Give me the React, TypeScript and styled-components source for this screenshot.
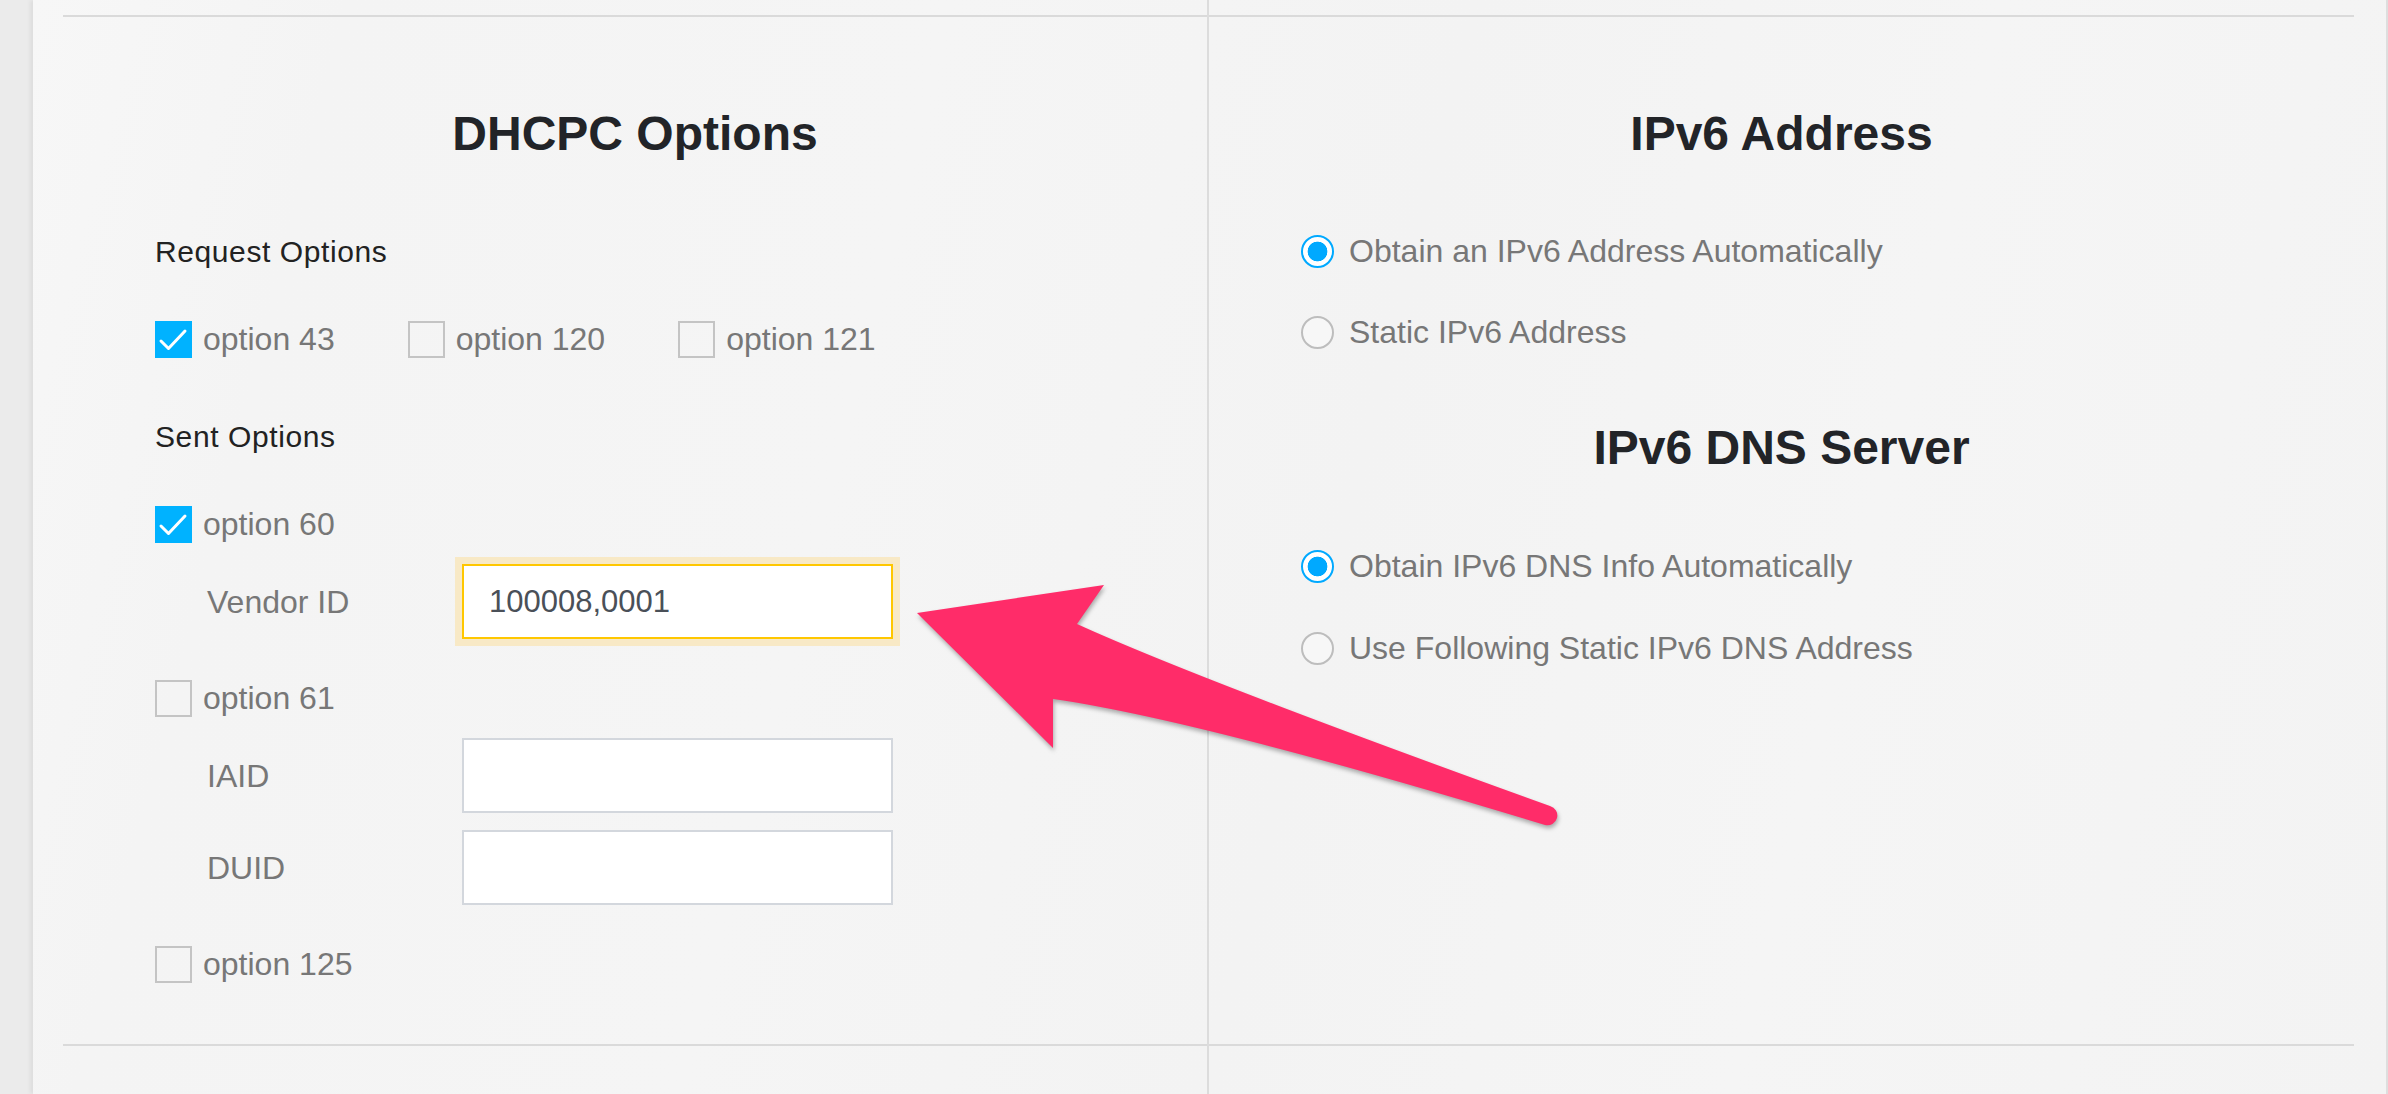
import React from 'react';
import styled, { createGlobalStyle } from 'styled-components';

const GlobalStyle = createGlobalStyle`
  html, body {
    margin: 0;
    padding: 0;
  }
  body {
    background: #ebebeb;
    font-family: "Liberation Sans", Arial, Helvetica, sans-serif;
  }
`;

const Page = styled.div`
  position: relative;
  display: flex;
  height: 100vh;
  min-height: 1094px;
  overflow: hidden;
`;

const Gutter = styled.div`
  width: 33px;
  flex-shrink: 0;
  background: #ebebeb;
`;

const Panel = styled.main`
  flex: 1;
  display: flex;
  background: linear-gradient(
    104deg,
    #f7f7f7 0%,
    #f4f4f4 12%,
    #f5f5f5 35%,
    #f3f3f3 55%,
    #f5f5f5 75%,
    #f3f3f3 100%
  );
  box-shadow: -3px 0 4px rgba(0, 0, 0, 0.06);
  border-right: 2px solid #dedede;
`;

const LeftColumn = styled.div`
  width: 1174px;
  flex-shrink: 0;
  box-sizing: border-box;
  padding: 15px 0 48px 30px;
  display: flex;
  flex-direction: column;
`;

const RightColumn = styled.div`
  flex: 1;
  box-sizing: border-box;
  border-left: 2px solid #dcdcdc;
  padding: 15px 32px 48px 0;
  display: flex;
  flex-direction: column;
`;

const Section = styled.section`
  flex: 1;
  display: flex;
  flex-direction: column;
  border-top: 2px solid #dadada;
  border-bottom: 2px solid #dadada;
`;

const Title = styled.h2<{ $top: number }>`
  margin: ${({ $top }) => $top}px 0 0;
  font-size: 48px;
  line-height: 48px;
  font-weight: 700;
  color: #222428;
  text-align: center;
`;

const GroupLabel = styled.div<{ $top: number }>`
  margin: ${({ $top }) => $top}px 0 0 92px;
  font-size: 30px;
  line-height: 40px;
  letter-spacing: 0.6px;
  color: #222;
`;

const CheckRow = styled.div<{ $top: number }>`
  display: flex;
  align-items: center;
  gap: 73px;
  height: 40px;
  margin: ${({ $top }) => $top}px 0 0 92px;
`;

const CheckItem = styled.label`
  display: inline-flex;
  align-items: center;
  gap: 11px;
  font-size: 32px;
  line-height: 40px;
  color: #777;
`;

const Box = styled.span<{ $checked?: boolean }>`
  width: 37px;
  height: 37px;
  box-sizing: border-box;
  display: flex;
  align-items: center;
  justify-content: center;
  border: 2px solid ${({ $checked }) => ($checked ? '#00b2ff' : '#c4c4c4')};
  background: ${({ $checked }) => ($checked ? '#00b2ff' : 'transparent')};
`;

const FieldRow = styled.div<{ $top: number }>`
  display: flex;
  align-items: center;
  margin: ${({ $top }) => $top}px 0 0 144px;
`;

const FieldLabel = styled.span`
  flex: 0 0 255px;
  font-size: 32px;
  line-height: 40px;
  color: #777;
`;

const TextInput = styled.input<{ $focused?: boolean }>`
  width: 431px;
  height: 75px;
  box-sizing: border-box;
  padding: 0 0 0 25px;
  border: 2px solid ${({ $focused }) => ($focused ? '#ffc700' : '#d3d7dd')};
  box-shadow: ${({ $focused }) => ($focused ? '0 0 0 7px #f8e9c6' : 'none')};
  background: #fff;
  font-family: "Liberation Sans", Arial, Helvetica, sans-serif;
  font-size: 31px;
  color: #4a5058;
  outline: none;
`;

const RadioRow = styled.label<{ $top: number }>`
  display: flex;
  align-items: center;
  gap: 15px;
  height: 40px;
  margin: ${({ $top }) => $top}px 0 0 92px;
  font-size: 32px;
  line-height: 40px;
  color: #777;
`;

const Radio = styled.span<{ $selected?: boolean }>`
  width: 33px;
  height: 33px;
  box-sizing: border-box;
  border-radius: 50%;
  border: 2px solid ${({ $selected }) => ($selected ? '#00a9ff' : '#bdbdbd')};
  background: ${({ $selected }) =>
    $selected
      ? 'radial-gradient(circle, #00a9ff 0 9.5px, #fff 10.2px)'
      : '#f7f7f7'};
`;

const Overlay = styled.svg`
  position: absolute;
  left: 0;
  top: 0;
  width: 2388px;
  height: 1094px;
  pointer-events: none;
`;

const ArrowShape = styled.path`
  fill: #ff2c69;
  filter: drop-shadow(1px 3px 2px rgba(0, 0, 0, 0.3));
`;

const Check: React.FC<{ checked?: boolean; label: string }> = ({ checked, label }) => (
  <CheckItem>
    <Box $checked={checked}>
      {checked && (
        <svg width='33' height='33' viewBox='0 0 33 33'>
          <path
            d='M4 18 L11.5 25.5 L28 8'
            fill='none'
            stroke='#fff'
            strokeWidth='3'
            strokeLinecap='round'
            strokeLinejoin='round'
          />
        </svg>
      )}
    </Box>
    {label}
  </CheckItem>
);

export default function App() {
  return (
    <Page>
      <GlobalStyle />
      <Gutter />
      <Panel>
        <LeftColumn>
          <Section>
            <Title $top={93}>DHCPC Options</Title>
            <GroupLabel $top={74}>Request Options</GroupLabel>
            <CheckRow $top={47}>
              <Check checked label='option 43' />
              <Check label='option 120' />
              <Check label='option 121' />
            </CheckRow>
            <GroupLabel $top={58}>Sent Options</GroupLabel>
            <CheckRow $top={47}>
              <Check checked label='option 60' />
            </CheckRow>
            <FieldRow $top={20}>
              <FieldLabel>Vendor ID</FieldLabel>
              <TextInput $focused defaultValue='100008,0001' />
            </FieldRow>
            <CheckRow $top={39}>
              <Check label='option 61' />
            </CheckRow>
            <FieldRow $top={20}>
              <FieldLabel>IAID</FieldLabel>
              <TextInput />
            </FieldRow>
            <FieldRow $top={17}>
              <FieldLabel>DUID</FieldLabel>
              <TextInput />
            </FieldRow>
            <CheckRow $top={39}>
              <Check label='option 125' />
            </CheckRow>
          </Section>
        </LeftColumn>
        <RightColumn>
          <Section>
            <Title $top={93}>IPv6 Address</Title>
            <RadioRow $top={73}>
              <Radio $selected />
              Obtain an IPv6 Address Automatically
            </RadioRow>
            <RadioRow $top={41}>
              <Radio />
              Static IPv6 Address
            </RadioRow>
            <Title $top={72}>IPv6 DNS Server</Title>
            <RadioRow $top={74}>
              <Radio $selected />
              Obtain IPv6 DNS Info Automatically
            </RadioRow>
            <RadioRow $top={42}>
              <Radio />
              Use Following Static IPv6 DNS Address
            </RadioRow>
          </Section>
        </RightColumn>
      </Panel>
      <Overlay viewBox='0 0 2388 1094'>
        <ArrowShape d='M917 613 L1104 585 L1077 624 Q1200 680 1550 806 A9 9 0 0 1 1545 825 Q1200 720 1053 699 L1053 748 Z' />
      </Overlay>
    </Page>
  );
}
